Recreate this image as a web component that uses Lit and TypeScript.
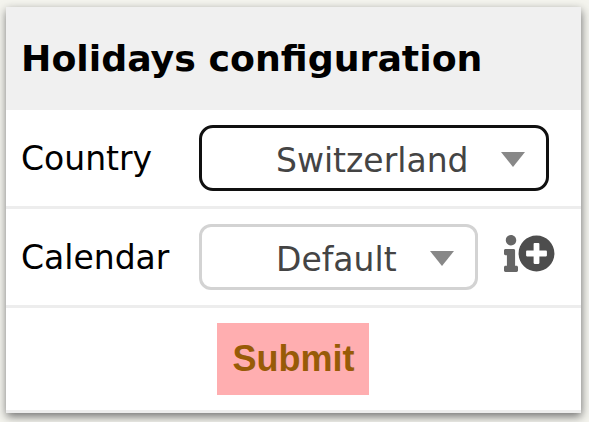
import { LitElement, html, css } from "lit";
import { customElement, property } from "lit/decorators.js";

@customElement("select-box")
class SelectBox extends LitElement {
  @property() value = "";
  @property({ type: Boolean, reflect: true }) focused = false;

  static styles = css`
    :host {
      box-sizing: border-box;
      display: flex;
      align-items: center;
      justify-content: space-between;
      height: 66px;
      padding: 0 21px 0 74px;
      border: 3px solid #d3d3d3;
      border-radius: 12px;
      background: #fff;
      color: #444;
      white-space: nowrap;
    }
    :host([focused]) {
      border-color: #101010;
      border-radius: 14px;
    }
    .value {
      line-height: 40px;
      padding-top: 6px;
    }
    .arrow {
      display: block;
      flex: none;
      width: 24px;
      height: 15px;
      margin-top: 2px;
      fill: #888;
    }
  `;

  render() {
    return html`
      <span class="value">${this.value}</span>
      <svg class="arrow" viewBox="0 0 24 15"><path d="M0 0H24L12 15Z" /></svg>
    `;
  }
}

@customElement("app-root")
class AppRoot extends LitElement {
  static styles = css`
    :host {
      display: block;
      box-sizing: border-box;
      height: 422px;
      padding: 7px 8px 9px 6px;
      overflow: hidden;
      background: #f4f4ee;
      color: #000;
      font: 33px/40px "DejaVu Sans", sans-serif;
    }
    .card {
      height: 406px;
      background: #fff;
      box-shadow: 0 3px 9px 0.5px #707070;
    }
    .header {
      box-sizing: border-box;
      height: 103px;
      margin: 0;
      padding: 32px 15px 0;
      background: #f0f0f0;
      font-size: 36.3px;
      line-height: 40px;
      font-weight: bold;
      white-space: nowrap;
    }
    .row {
      box-sizing: border-box;
      display: flex;
      align-items: center;
      height: 99px;
      padding: 0 15px;
      border-bottom: 3px solid #ededed;
    }
    .label {
      width: 178px;
      padding-top: 2px;
    }
    .country {
      width: 350px;
    }
    .calendar {
      width: 279px;
    }
    .icons {
      display: flex;
      margin-left: 26px;
      margin-top: -8px;
    }
    .info {
      width: 14px;
      height: 37px;
      fill: #666;
    }
    .plus {
      width: 37px;
      height: 37px;
      fill: #4d4d4d;
    }
    .actions {
      height: 105px;
      justify-content: center;
      padding: 0 16px 0 15px;
    }
    .submit {
      width: 152px;
      height: 72px;
      padding: 0 0 0 1px;
      border: 0;
      background: #ffaeb0;
      color: #985b07;
      font: bold 36px/72px "Liberation Sans", sans-serif;
    }
  `;

  render() {
    return html`
      <div class="card">
        <h1 class="header">Holidays configuration</h1>
        <div class="row">
          <span class="label">Country</span>
          <select-box class="country" value="Switzerland" focused></select-box>
        </div>
        <div class="row">
          <span class="label">Calendar</span>
          <select-box class="calendar" value="Default"></select-box>
          <span class="icons">
            <svg class="info" viewBox="0 0 192 512" preserveAspectRatio="none">
              <path d="M20 424.229h20V279.771H20c-11.046 0-20-8.954-20-20V212c0-11.046 8.954-20 20-20h112c11.046 0 20 8.954 20 20v212.229h20c11.046 0 20 8.954 20 20V492c0 11.046-8.954 20-20 20H20c-11.046 0-20-8.954-20-20v-47.771c0-11.046 8.954-20 20-20zM96 0C56.235 0 24 32.235 24 72s32.235 72 72 72 72-32.235 72-72S135.764 0 96 0z" />
            </svg>
            <svg class="plus" viewBox="0 0 512 512">
              <path d="M256 8C119 8 8 119 8 256s111 248 248 248 248-111 248-248S393 8 256 8zm144 276c0 6.600-5.400 12-12 12h-92v92c0 6.600-5.400 12-12 12h-56c-6.600 0-12-5.400-12-12v-92h-92c-6.600 0-12-5.400-12-12v-56c0-6.600 5.400-12 12-12h92v-92c0-6.600 5.400-12 12-12h56c6.600 0 12 5.400 12 12v92h92c6.600 0 12 5.400 12 12v56z" />
            </svg>
          </span>
        </div>
        <div class="row actions">
          <button class="submit">Submit</button>
        </div>
      </div>
    `;
  }
}
